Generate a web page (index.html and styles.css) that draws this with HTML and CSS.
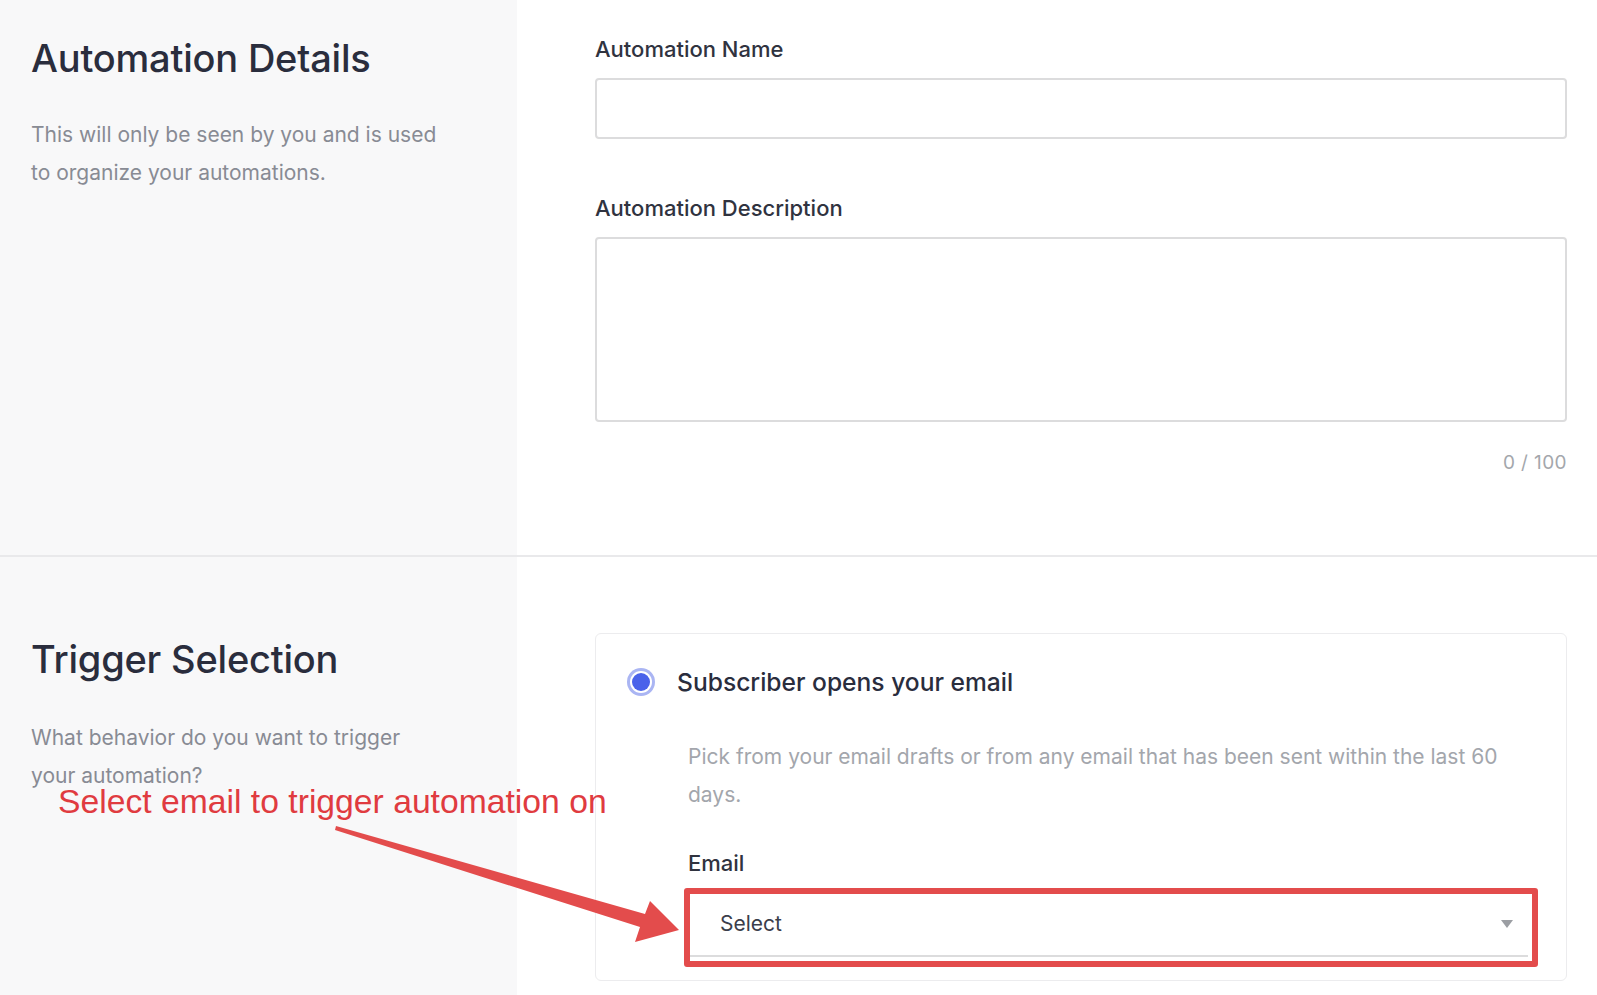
FILE: index.html
```html
<!DOCTYPE html>
<html lang="en">
<head>
    <meta charset="UTF-8">
    <meta name="viewport" content="width=device-width, initial-scale=1.0">
    <title>New Automation</title>
    <link rel="stylesheet" href="styles.css">
</head>
<body>
    <div class="page">
        <section class="section section-details">
            <div class="side">
                <h2>Automation Details</h2>
                <p class="side-text">This will only be seen by you and is used to organize your automations.</p>
            </div>
            <div class="main">
                <div class="form-group">
                    <label for="name">Automation Name</label>
                    <input type="text" id="name" class="text-input">
                </div>
                <div class="form-group last">
                    <label for="description">Automation Description</label>
                    <textarea id="description" class="text-area"></textarea>
                    <div class="counter">0 / 100</div>
                </div>
            </div>
        </section>

        <section class="section section-trigger">
            <div class="side">
                <h2>Trigger Selection</h2>
                <p class="side-text">What behavior do you want to trigger your automation?</p>
            </div>
            <div class="main">
                <div class="card">
                    <div class="option">
                        <span class="radio"></span>
                        <span class="option-title">Subscriber opens your email</span>
                    </div>
                    <div class="option-body">
                        <p class="option-text">Pick from your email drafts or from any email that has been sent within the last 60 days.</p>
                        <label class="field-label">Email</label>
                        <div class="select-wrap">
                            <div class="select">
                                <span>Select</span>
                                <span class="caret"></span>
                            </div>
                            <div class="highlight"></div>
                        </div>
                    </div>
                </div>
            </div>
        </section>

        <div class="note">Select email to trigger automation on</div>
        <svg class="note-arrow" width="1597" height="995" viewBox="0 0 1597 995">
            <polygon points="336,826 645,914 650,901 679,930 635,942 640,927 335,830" fill="#e34c4c"/>
        </svg>
    </div>
</body>
</html>
```

FILE: styles.css
```css
body {
    margin: 0;
    padding: 0;
    font-family: Inter, "Liberation Sans", sans-serif;
    background-color: #fff;
    color: #2b2e3d;
}
.page {
    position: relative;
    height: 995px;
    overflow: hidden;
}
.section {
    display: grid;
    grid-template-columns: 517px 1fr;
}
.section-details {
    border-bottom: 2px solid #e9e9eb;
}
.side {
    background-color: #f8f8f9;
    padding: 35px 31px 0 31px;
}
.section-trigger .side {
    padding-top: 79px;
}
.side h2 {
    margin: 0;
    font-size: 38px;
    line-height: 46px;
    font-weight: 500;
    color: #2a2d3d;
    letter-spacing: -0.2px;
}
.side-text {
    margin: 35px 0 0 0;
    max-width: 415px;
    font-size: 21px;
    line-height: 38px;
    color: #888b94;
}
.section-trigger .side-text {
    margin-top: 37px;
}
.main {
    padding: 36px 30px 81px 78px;
}
.section-trigger .main {
    padding-top: 76px;
    padding-bottom: 40px;
}
.form-group {
    margin-bottom: 56px;
}
.form-group.last {
    margin-bottom: 0;
}
.form-group label,
.field-label {
    display: block;
    margin-bottom: 16px;
    font-size: 22px;
    line-height: 26px;
    font-weight: 500;
    color: #30333f;
}
.text-input,
.text-area {
    display: block;
    width: 100%;
    box-sizing: border-box;
    border: 2px solid #dcdcdd;
    border-radius: 4px;
    background-color: #fff;
    font-family: inherit;
    font-size: 18px;
}
.text-input {
    height: 61px;
}
.text-area {
    height: 185px;
    resize: none;
}
.counter {
    margin-top: 30px;
    text-align: right;
    font-size: 19px;
    line-height: 22px;
    letter-spacing: 0.4px;
    color: #a4a7ac;
}
.card {
    border: 1px solid #ececee;
    border-radius: 6px;
    padding: 32px 38px 23px 31px;
}
.option {
    display: flex;
    align-items: center;
    gap: 22px;
}
.radio {
    width: 18px;
    height: 18px;
    margin: 5px;
    border-radius: 50%;
    background-color: #4a62ea;
    box-shadow: 0 0 0 2px #fff, 0 0 0 5px #aab5f3;
}
.option-title {
    font-size: 24.6px;
    line-height: 32px;
    font-weight: 500;
    color: #2a2d3d;
}
.option-body {
    padding-left: 61px;
}
.option-text {
    margin: 40px 0 36px 0;
    font-size: 21px;
    line-height: 38px;
    color: #a3a6ac;
}
.select-wrap {
    position: relative;
}
.select {
    display: flex;
    justify-content: space-between;
    align-items: center;
    height: 63px;
    padding: 0 15px 0 32px;
    border-bottom: 2px solid #dcdcdd;
    font-size: 21px;
    color: #3b3e4b;
}
.caret {
    width: 0;
    height: 0;
    border-left: 6px solid transparent;
    border-right: 6px solid transparent;
    border-top: 8px solid #9b9ea3;
}
.highlight {
    position: absolute;
    top: -4px;
    left: -4px;
    right: -10px;
    bottom: -10px;
    border: 6px solid #e34c4c;
    border-radius: 3px;
}
.note {
    position: absolute;
    left: 58px;
    top: 781px;
    font-family: "Liberation Sans", Arial, sans-serif;
    font-size: 33.7px;
    line-height: 40px;
    color: #e03b40;
}
.note-arrow {
    position: absolute;
    top: 0;
    left: 0;
    pointer-events: none;
}
```
